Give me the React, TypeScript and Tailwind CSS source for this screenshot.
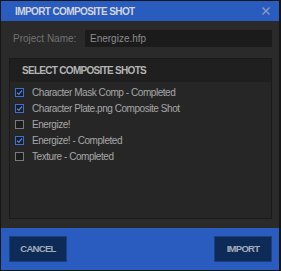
import React from 'react';

interface Shot {
  name: string;
  checked: boolean;
}

const shots: Shot[] = [
  { name: 'Character Mask Comp - Completed', checked: true },
  { name: 'Character Plate.png Composite Shot', checked: true },
  { name: 'Energize!', checked: false },
  { name: 'Energize! - Completed', checked: true },
  { name: 'Texture - Completed', checked: false },
];

const font = { fontFamily: '"Liberation Sans", Arial, sans-serif' };

const Checkbox: React.FC<{ checked: boolean }> = ({ checked }) => (
  <div
    className={`w-[9px] h-[9px] border flex items-center justify-center bg-[#1c1c1c] ${
      checked ? 'border-[#3a70d8]' : 'border-[#7a7a7a]'
    }`}
  >
    {checked && (
      <svg width="7" height="7" viewBox="0 0 7 7">
        <path d="M1 3.6 L2.8 5.3 L6 1.5" fill="none" stroke="#4a86ee" strokeWidth="1.2" />
      </svg>
    )}
  </div>
);

export default function App() {
  return (
    <div
      className="w-[281px] h-[271px] bg-[#161616] pt-[1px] pl-[1px] pr-[2px] pb-[1px] flex flex-col"
      style={font}
    >
      <div className="h-[20px] bg-[#2a5bbf] flex items-center justify-between pl-[14px] pr-[9px]">
        <span className="text-[10px] tracking-[-0.6px] font-bold text-[#d2d6de]">IMPORT COMPOSITE SHOT</span>
        <svg width="8" height="8" viewBox="0 0 8 8">
          <path d="M0.5 0.5 L7.5 7.5 M7.5 0.5 L0.5 7.5" stroke="#8e9cbc" strokeWidth="1.4" />
        </svg>
      </div>

      <div className="flex-1 bg-[#2a2a2a] pl-[8px] pr-[7px] flex flex-col">
        <div className="mt-[9px] h-[17px] flex items-center">
          <span className="ml-[4px] w-[72px] text-[10px] text-[#727272]">Project Name:</span>
          <div className="flex-1 h-full bg-[#1b1b1b] flex items-center pl-[5px] text-[10px] text-[#8c8c8c]">
            Energize.hfp
          </div>
        </div>

        <div className="mt-[11px] mb-[9px] flex-1 border border-[#1a1a1a] bg-[#262626] flex flex-col">
          <div className="h-[23px] bg-[#1f1f1f] flex items-center pl-[12px] text-[10px] tracking-[-0.7px] font-bold text-[#b4b4b4]">
            SELECT COMPOSITE SHOTS
          </div>
          <div className="pt-[2px] flex flex-col">
            {shots.map((shot) => (
              <div key={shot.name} className="h-[16px] flex items-center pl-[5px] gap-[8px]">
                <Checkbox checked={shot.checked} />
                <span className="text-[10px] tracking-[-0.45px] text-[#a6a6a6]">{shot.name}</span>
              </div>
            ))}
          </div>
        </div>
      </div>

      <div className="h-[42px] bg-[#2a5bbf] flex items-center justify-between pl-[8px] pr-[7px]">
        <button className="w-[58px] h-[26px] bg-[#0e2a56] border border-[#1c3f7e] text-[9.5px] tracking-[-0.7px] font-bold text-[#a4adbd]">
          CANCEL
        </button>
        <button className="w-[58px] h-[26px] bg-[#0e2a56] border border-[#1c3f7e] text-[9.5px] tracking-[-0.7px] font-bold text-[#a4adbd]">
          IMPORT
        </button>
      </div>
    </div>
  );
}
